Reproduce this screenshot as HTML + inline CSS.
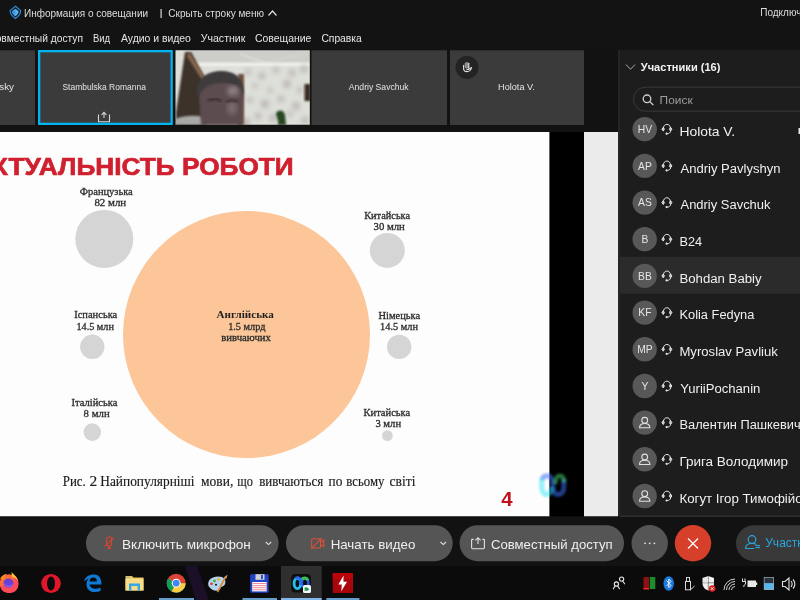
<!DOCTYPE html>
<html><head><meta charset="utf-8">
<style>
*{margin:0;padding:0}
html,body{width:800px;height:600px;overflow:hidden;background:#121212}
svg{display:block;will-change:transform}
</style></head><body>
<svg width="800" height="600" viewBox="0 0 800 600">
<defs>
<filter id="b05" x="-20%" y="-20%" width="140%" height="140%"><feGaussianBlur stdDeviation="0.6"/></filter>
<filter id="b09" x="-20%" y="-20%" width="140%" height="140%"><feGaussianBlur stdDeviation="0.9"/></filter>
<filter id="b1" x="-20%" y="-20%" width="140%" height="140%"><feGaussianBlur stdDeviation="1.2"/></filter>
<filter id="b2" x="-20%" y="-20%" width="140%" height="140%"><feGaussianBlur stdDeviation="2.5"/></filter>
<linearGradient id="ceil" x1="0" y1="0" x2="0" y2="1"><stop offset="0" stop-color="#bdbdb8"/><stop offset="1" stop-color="#d4d3ce"/></linearGradient>
<radialGradient id="face" cx="0.5" cy="0.45" r="0.6"><stop offset="0" stop-color="#a48a80"/><stop offset="1" stop-color="#6e5a55"/></radialGradient>
<clipPath id="vclip"><rect x="175.5" y="50.2" width="134.3" height="74.6"/></clipPath>
<clipPath id="slideclip"><rect x="0" y="132" width="550" height="384.5"/></clipPath>
</defs>
<!-- top bars -->
<rect x="0" y="0" width="800" height="50" fill="#131313"/>
<rect x="0" y="50" width="620" height="82" fill="#121212"/>
<!-- shield -->
<path d="M15.4 6.3 L20.6 10.6 C20.6 13.8 18.4 16.6 15.4 18.4 C12.4 16.6 10.2 13.8 10.2 10.6 Z" fill="none" stroke="#2a86d6" stroke-width="1.3"/>
<path d="M15.4 8.7 L18.7 11.2 C18.7 13.3 17.3 15 15.4 16.2 C13.5 15 12.1 13.3 12.1 11.2 Z" fill="#58b2f2"/>
<path d="M15.4 8.7 V16.2 C13.5 15 12.1 13.3 12.1 11.2 Z" fill="#3f98e0"/>
<rect x="160.5" y="9" width="1.2" height="9" fill="#d8d8d8"/>
<path d="M268.5 15.5 L272.5 11 L276.5 15.5" fill="none" stroke="#dedede" stroke-width="1.2"/>
<text transform="translate(-4.37,42) scale(0.9768,1)" font-family="Liberation Sans" font-size="10.5" fill="#e6e6e6">овместный доступ</text>
<!-- video strip tiles -->
<rect x="0" y="50.3" width="35" height="74.7" fill="#3b3b3b"/>
<text x="14" y="89.5" text-anchor="end" font-family="Liberation Sans" font-size="9.8" fill="#e4e4e4">sky</text>
<rect x="38" y="50" width="134.8" height="75" fill="#00b4ee"/>
<rect x="40.3" y="52.3" width="130.2" height="70.4" fill="#3b3b3b"/>
<g fill="none" stroke="#d8d8d8" stroke-width="1.1"><path d="M98.5 114.5 V121.8 H109.5 V114.5"/><path d="M104 118 V112.5 M101.5 115 L104 112.3 L106.5 115"/></g>
<rect x="311.5" y="50.3" width="135.5" height="74.7" fill="#3b3b3b"/>
<rect x="450" y="50.3" width="134" height="74.7" fill="#3b3b3b"/>
<circle cx="467" cy="67.4" r="11.5" fill="#232323"/>
<rect x="464.6" y="62.2" width="4.2" height="6.4" rx="1.6" fill="#8e8e8e"/>
<g fill="none" stroke="#e2e2e2" stroke-width="1.1" stroke-linecap="round"><path d="M463.6 65.4 V68.5 C463.6 70.6 465.1 71.6 467 71.6 C469.1 71.6 470.6 70.4 471.6 67.6"/><path d="M468.8 63.2 V68.6"/><path d="M466.6 69.7 C467.8 69.7 469.7 69 470.9 67.9"/></g>
<!-- video -->
<g clip-path="url(#vclip)"><g filter="url(#b05)">
<rect x="175" y="50" width="136" height="75" fill="#dddfd9"/>
<rect x="175" y="50" width="136" height="14" fill="#cdcdca"/>
<path d="M240 54 L266 63" stroke="#e6e6e2" stroke-width="1.2" filter="url(#b1)"/>
<path d="M266 63 L310 52" stroke="#d8d8d4" stroke-width="1" filter="url(#b1)"/>
<rect x="190" y="62.5" width="121" height="3.5" fill="#efefeb" filter="url(#b1)"/>
<g filter="url(#b2)" fill="#b0a4a4" opacity="0.7"><circle cx="248" cy="72" r="2.9"/><circle cx="262" cy="76" r="3.4"/><circle cx="276" cy="70" r="3.1"/><circle cx="292" cy="73" r="3.5"/><circle cx="304" cy="69" r="3.6"/><circle cx="255" cy="86" r="2.6"/><circle cx="270" cy="90" r="2.5"/><circle cx="287" cy="84" r="3.9"/><circle cx="300" cy="90" r="2.9"/><circle cx="250" cy="100" r="2.9"/><circle cx="265" cy="104" r="4.2"/><circle cx="281" cy="99" r="3.3"/><circle cx="296" cy="106" r="3.9"/><circle cx="258" cy="116" r="3.3"/><circle cx="273" cy="118" r="3.6"/><circle cx="290" cy="114" r="2.8"/><circle cx="305" cy="120" r="3.6"/><circle cx="246" cy="122" r="4.0"/></g>
<rect x="175" y="50" width="16" height="75" fill="#deded8"/>
<path d="M176 112 L185 52 L191 52 L206 80 L206 125 L176 125 Z" fill="#3e302a" filter="url(#b1)"/>
<path d="M189 52 L206 79 L206 86 L187 56 Z" fill="#8a6a50" filter="url(#b1)"/>
<rect x="238" y="74" width="6" height="51" fill="#6e5040" filter="url(#b1)"/>
<rect x="304.5" y="84" width="6" height="17" fill="#3a2a20" filter="url(#b1)"/>

<path d="M276 113 C279 109 284 110 285 115 L286 125 H278 C279 120 276 117 276 113 Z" fill="#264a22" filter="url(#b1)"/>
<path d="M175 119 C185 115 195 115 205 117 L206 125 H175 Z" fill="#a9a9a7" filter="url(#b1)"/>
<path d="M199 96 C197 83 205 73 221 73 C237 73 244 82 243 96 L242 125 H201 Z" fill="#5c4c50" filter="url(#b1)"/>
<path d="M197 94 C196 80 206 71 221 71 C237 71 245 80 243 96 C240 86 232 82 221 83 C210 83 202 87 198 98 Z" fill="#3c3a3b" filter="url(#b1)"/>
<ellipse cx="233" cy="91" rx="6" ry="5" fill="#8c8082" filter="url(#b2)"/>
<ellipse cx="232" cy="108" rx="5" ry="7" fill="#7a6c6e" filter="url(#b2)"/>
<path d="M208 101 C213 98 218 99 221 101 M226 102 C230 100 234 100 238 102" stroke="#3a2c30" stroke-width="2.2" fill="none" filter="url(#b1)"/>
</g></g>
<!-- slide -->
<rect x="0" y="132" width="550" height="384.5" fill="#fdfdfd"/>
<rect x="549.4" y="132" width="34.6" height="384.5" fill="#000"/>
<rect x="584" y="132" width="34" height="384.5" fill="#ebebeb"/>
<g clip-path="url(#slideclip)">
<text transform="translate(-27.15,174.9) scale(1.0709,1)" font-family="Liberation Sans" font-weight="700" font-size="24.5" fill="#d0202f" stroke="#d0202f" stroke-width="0.7">АКТУАЛЬНІСТЬ РОБОТИ</text>
</g>
<circle cx="246.5" cy="334.5" r="123.5" fill="#fcc698"/>
<circle cx="104.3" cy="238.9" r="29" fill="#d5d5d5"/>
<circle cx="387.3" cy="250.4" r="17.5" fill="#d5d5d5"/>
<circle cx="92.3" cy="346.8" r="12.2" fill="#d5d5d5"/>
<circle cx="399.2" cy="346.9" r="12.2" fill="#d5d5d5"/>
<circle cx="92.3" cy="432.1" r="8.8" fill="#d5d5d5"/>
<circle cx="387.4" cy="435.6" r="5.4" fill="#d5d5d5"/>
<!-- webex watermark -->
<g filter="url(#b09)" fill="none" stroke-width="5" stroke-linecap="butt">
<path d="M542.3 480 C542.8 476.8 545 475.8 547 475.8 C550.5 475.8 552 478.3 552.5 482 L553 487 C553.5 492 555.5 494.6 558.2 494.6 C561.2 494.6 563.8 492 563.8 487 V479" stroke="#3a6cf8" opacity="0.55"/>
<path d="M541.8 478.5 V486.5 C541.8 492 544 494.6 546.8 494.6 C549.5 494.6 551.6 492 551.6 487" stroke="#10e0f2" opacity="0.45"/>
<path d="M555.3 484 C555.3 478.5 557.5 475.8 559.6 475.8 C562.5 475.8 564 478.3 564 482.5" stroke="#48e070" opacity="0.5" stroke-width="4.6"/>
</g>
<!-- panel -->
<rect x="618" y="50" width="182" height="466" fill="#1d1d1d"/>
<rect x="620" y="515.8" width="180" height="1.2" fill="#4a4a4a"/>
<rect x="618.3" y="50" width="1.3" height="466" fill="#2c2c2c"/>
<path d="M626 64.5 L630.5 69.3 L635 64.5" fill="none" stroke="#a8a8a8" stroke-width="1"/>
<rect x="633.5" y="87.2" width="180" height="24" rx="12" fill="#1d1d1d" stroke="#3a3a3a" stroke-width="1"/>
<g fill="none" stroke="#cfcfcf" stroke-width="1.3"><circle cx="647" cy="98.8" r="3.8"/><path d="M649.8 101.6 L653.3 105"/></g>
<rect x="798.5" y="128" width="2" height="6" fill="#e8e8e8"/>
<rect x="620" y="256.8" width="180" height="37" fill="#2b2b2b"/><circle cx="644.7" cy="129.2" r="12.2" fill="#585858"/><text x="644.9" y="133.0" text-anchor="middle" font-family="Liberation Sans" font-size="10.3" fill="#e6e6e6">HV</text><g transform="translate(666.9,129.2)" fill="none" stroke="#e8e8e8" stroke-width="1"><path d="M-3.6 -0.5 C-3.6 -6.3 3.6 -6.3 3.6 -0.5"/><path d="M-3.6 -1.9 L-5 0 L-3.6 1.9 L-2.6 0 Z" fill="#bdbdbd"/><path d="M3.6 -1.9 L5 0 L3.6 1.9 L2.6 0 Z" fill="#bdbdbd"/><path d="M3.8 2 C3.2 3.8 2 4.4 0.3 4.6"/><circle cx="-0.3" cy="4.5" r="1.1" fill="#e8e8e8" stroke="none"/></g><circle cx="644.7" cy="165.9" r="12.2" fill="#585858"/><text x="644.9" y="169.7" text-anchor="middle" font-family="Liberation Sans" font-size="10.3" fill="#e6e6e6">AP</text><g transform="translate(666.9,165.9)" fill="none" stroke="#e8e8e8" stroke-width="1"><path d="M-3.6 -0.5 C-3.6 -6.3 3.6 -6.3 3.6 -0.5"/><path d="M-3.6 -1.9 L-5 0 L-3.6 1.9 L-2.6 0 Z" fill="#bdbdbd"/><path d="M3.6 -1.9 L5 0 L3.6 1.9 L2.6 0 Z" fill="#bdbdbd"/><path d="M3.8 2 C3.2 3.8 2 4.4 0.3 4.6"/><circle cx="-0.3" cy="4.5" r="1.1" fill="#e8e8e8" stroke="none"/></g><circle cx="644.7" cy="202.6" r="12.2" fill="#585858"/><text x="644.9" y="206.4" text-anchor="middle" font-family="Liberation Sans" font-size="10.3" fill="#e6e6e6">AS</text><g transform="translate(666.9,202.6)" fill="none" stroke="#e8e8e8" stroke-width="1"><path d="M-3.6 -0.5 C-3.6 -6.3 3.6 -6.3 3.6 -0.5"/><path d="M-3.6 -1.9 L-5 0 L-3.6 1.9 L-2.6 0 Z" fill="#bdbdbd"/><path d="M3.6 -1.9 L5 0 L3.6 1.9 L2.6 0 Z" fill="#bdbdbd"/><path d="M3.8 2 C3.2 3.8 2 4.4 0.3 4.6"/><circle cx="-0.3" cy="4.5" r="1.1" fill="#e8e8e8" stroke="none"/></g><circle cx="644.7" cy="239.2" r="12.2" fill="#585858"/><text x="644.9" y="243.0" text-anchor="middle" font-family="Liberation Sans" font-size="10.3" fill="#e6e6e6">B</text><g transform="translate(666.9,239.2)" fill="none" stroke="#e8e8e8" stroke-width="1"><path d="M-3.6 -0.5 C-3.6 -6.3 3.6 -6.3 3.6 -0.5"/><path d="M-3.6 -1.9 L-5 0 L-3.6 1.9 L-2.6 0 Z" fill="#bdbdbd"/><path d="M3.6 -1.9 L5 0 L3.6 1.9 L2.6 0 Z" fill="#bdbdbd"/><path d="M3.8 2 C3.2 3.8 2 4.4 0.3 4.6"/><circle cx="-0.3" cy="4.5" r="1.1" fill="#e8e8e8" stroke="none"/></g><circle cx="644.7" cy="275.9" r="12.2" fill="#585858"/><text x="644.9" y="279.7" text-anchor="middle" font-family="Liberation Sans" font-size="10.3" fill="#e6e6e6">BB</text><g transform="translate(666.9,275.9)" fill="none" stroke="#e8e8e8" stroke-width="1"><path d="M-3.6 -0.5 C-3.6 -6.3 3.6 -6.3 3.6 -0.5"/><path d="M-3.6 -1.9 L-5 0 L-3.6 1.9 L-2.6 0 Z" fill="#bdbdbd"/><path d="M3.6 -1.9 L5 0 L3.6 1.9 L2.6 0 Z" fill="#bdbdbd"/><path d="M3.8 2 C3.2 3.8 2 4.4 0.3 4.6"/><circle cx="-0.3" cy="4.5" r="1.1" fill="#e8e8e8" stroke="none"/></g><circle cx="644.7" cy="312.6" r="12.2" fill="#585858"/><text x="644.9" y="316.4" text-anchor="middle" font-family="Liberation Sans" font-size="10.3" fill="#e6e6e6">KF</text><g transform="translate(666.9,312.6)" fill="none" stroke="#e8e8e8" stroke-width="1"><path d="M-3.6 -0.5 C-3.6 -6.3 3.6 -6.3 3.6 -0.5"/><path d="M-3.6 -1.9 L-5 0 L-3.6 1.9 L-2.6 0 Z" fill="#bdbdbd"/><path d="M3.6 -1.9 L5 0 L3.6 1.9 L2.6 0 Z" fill="#bdbdbd"/><path d="M3.8 2 C3.2 3.8 2 4.4 0.3 4.6"/><circle cx="-0.3" cy="4.5" r="1.1" fill="#e8e8e8" stroke="none"/></g><circle cx="644.7" cy="349.3" r="12.2" fill="#585858"/><text x="644.9" y="353.1" text-anchor="middle" font-family="Liberation Sans" font-size="10.3" fill="#e6e6e6">MP</text><g transform="translate(666.9,349.3)" fill="none" stroke="#e8e8e8" stroke-width="1"><path d="M-3.6 -0.5 C-3.6 -6.3 3.6 -6.3 3.6 -0.5"/><path d="M-3.6 -1.9 L-5 0 L-3.6 1.9 L-2.6 0 Z" fill="#bdbdbd"/><path d="M3.6 -1.9 L5 0 L3.6 1.9 L2.6 0 Z" fill="#bdbdbd"/><path d="M3.8 2 C3.2 3.8 2 4.4 0.3 4.6"/><circle cx="-0.3" cy="4.5" r="1.1" fill="#e8e8e8" stroke="none"/></g><circle cx="644.7" cy="386.0" r="12.2" fill="#585858"/><text x="644.9" y="389.8" text-anchor="middle" font-family="Liberation Sans" font-size="10.3" fill="#e6e6e6">Y</text><g transform="translate(666.9,386.0)" fill="none" stroke="#e8e8e8" stroke-width="1"><path d="M-3.6 -0.5 C-3.6 -6.3 3.6 -6.3 3.6 -0.5"/><path d="M-3.6 -1.9 L-5 0 L-3.6 1.9 L-2.6 0 Z" fill="#bdbdbd"/><path d="M3.6 -1.9 L5 0 L3.6 1.9 L2.6 0 Z" fill="#bdbdbd"/><path d="M3.8 2 C3.2 3.8 2 4.4 0.3 4.6"/><circle cx="-0.3" cy="4.5" r="1.1" fill="#e8e8e8" stroke="none"/></g><circle cx="644.7" cy="422.6" r="12.2" fill="#585858"/><g transform="translate(644.7,422.6)" fill="none" stroke="#e0e0e0" stroke-width="1.1"><circle cx="0" cy="-2.3" r="2.9"/><path d="M-5.2 5.2 C-5.2 2 -3 0.9 0 0.9 C3 0.9 5.2 2 5.2 5.2 Z"/></g><g transform="translate(666.9,422.6)" fill="none" stroke="#e8e8e8" stroke-width="1"><path d="M-3.6 -0.5 C-3.6 -6.3 3.6 -6.3 3.6 -0.5"/><path d="M-3.6 -1.9 L-5 0 L-3.6 1.9 L-2.6 0 Z" fill="#bdbdbd"/><path d="M3.6 -1.9 L5 0 L3.6 1.9 L2.6 0 Z" fill="#bdbdbd"/><path d="M3.8 2 C3.2 3.8 2 4.4 0.3 4.6"/><circle cx="-0.3" cy="4.5" r="1.1" fill="#e8e8e8" stroke="none"/></g><circle cx="644.7" cy="459.3" r="12.2" fill="#585858"/><g transform="translate(644.7,459.3)" fill="none" stroke="#e0e0e0" stroke-width="1.1"><circle cx="0" cy="-2.3" r="2.9"/><path d="M-5.2 5.2 C-5.2 2 -3 0.9 0 0.9 C3 0.9 5.2 2 5.2 5.2 Z"/></g><g transform="translate(666.9,459.3)" fill="none" stroke="#e8e8e8" stroke-width="1"><path d="M-3.6 -0.5 C-3.6 -6.3 3.6 -6.3 3.6 -0.5"/><path d="M-3.6 -1.9 L-5 0 L-3.6 1.9 L-2.6 0 Z" fill="#bdbdbd"/><path d="M3.6 -1.9 L5 0 L3.6 1.9 L2.6 0 Z" fill="#bdbdbd"/><path d="M3.8 2 C3.2 3.8 2 4.4 0.3 4.6"/><circle cx="-0.3" cy="4.5" r="1.1" fill="#e8e8e8" stroke="none"/></g><circle cx="644.7" cy="496.0" r="12.2" fill="#585858"/><g transform="translate(644.7,496.0)" fill="none" stroke="#e0e0e0" stroke-width="1.1"><circle cx="0" cy="-2.3" r="2.9"/><path d="M-5.2 5.2 C-5.2 2 -3 0.9 0 0.9 C3 0.9 5.2 2 5.2 5.2 Z"/></g><g transform="translate(666.9,496.0)" fill="none" stroke="#e8e8e8" stroke-width="1"><path d="M-3.6 -0.5 C-3.6 -6.3 3.6 -6.3 3.6 -0.5"/><path d="M-3.6 -1.9 L-5 0 L-3.6 1.9 L-2.6 0 Z" fill="#bdbdbd"/><path d="M3.6 -1.9 L5 0 L3.6 1.9 L2.6 0 Z" fill="#bdbdbd"/><path d="M3.8 2 C3.2 3.8 2 4.4 0.3 4.6"/><circle cx="-0.3" cy="4.5" r="1.1" fill="#e8e8e8" stroke="none"/></g>
<!-- bottom bar -->
<rect x="0" y="516.5" width="800" height="49.5" fill="#121212"/>
<rect x="0" y="566" width="800" height="34" fill="#0b0b0c"/>
<rect x="86" y="525.2" width="192.6" height="36" rx="18" fill="#555555"/>
<rect x="286" y="525.2" width="166.7" height="36" rx="18" fill="#555555"/>
<rect x="459.6" y="525.2" width="164.4" height="36" rx="18" fill="#555555"/>
<circle cx="649.7" cy="543.3" r="18.2" fill="#555555"/>
<circle cx="693" cy="543.3" r="18.2" fill="#d6402a"/>
<rect x="736" y="525.2" width="120" height="36" rx="18" fill="#393939"/>
<g fill="none" stroke="#dd4330" stroke-width="1.1"><rect x="106.7" y="536.7" width="4.8" height="9.4" rx="2.4"/><path d="M104.6 546.6 L113.8 537.6"/></g><path d="M107 548.9 H111.4 L109.2 546.3 Z" fill="#dd4330"/>
<path d="M265.8 542 L268.5 544.6 L271.2 542" fill="none" stroke="#e0e0e0" stroke-width="1.1"/>
<g fill="none" stroke="#de5038" stroke-width="1.1"><rect x="311.7" y="538.7" width="8.8" height="9.3" rx="1"/><path d="M320.6 542 L323.8 540.2 V546.5 L320.6 544.8 M311.3 548.6 L321.8 537.9"/></g>
<path d="M440.5 542 L443.3 544.6 L446 542" fill="none" stroke="#e0e0e0" stroke-width="1.1"/>
<g fill="none" stroke="#e2e2e2" stroke-width="1.1"><path d="M473.6 539.4 H472.3 Q471.6 539.4 471.6 540.2 V547.6 Q471.6 548.7 472.7 548.7 H483.3 Q484.4 548.7 484.4 547.6 V540.2 Q484.4 539.4 483.7 539.4 H482.4"/><path d="M478 543.9 V537.9 M475.4 540.4 L478 537.7 L480.6 540.4"/></g>
<g fill="#e6e6e6"><circle cx="645" cy="543.3" r="0.9"/><circle cx="649.7" cy="543.3" r="0.9"/><circle cx="654.4" cy="543.3" r="0.9"/></g>
<path d="M688 538.5 L698 548.5 M698 538.5 L688 548.5" stroke="#fff" stroke-width="1.2"/>
<g fill="none" stroke="#2aa6dd" stroke-width="1.2"><circle cx="752" cy="539.5" r="3.8"/><path d="M745.5 548.5 C745.5 544.5 748 543.5 752 543.5 C754 543.5 755.5 543.8 756.5 544.5 M745.5 548.5 H754"/></g>
<rect x="755.5" y="545" width="4.5" height="1.1" fill="#2aa6dd"/><rect x="755.5" y="547" width="4.5" height="1.1" fill="#2aa6dd"/>
<!-- taskbar -->
<path d="M185 566 H197 L209 600 H196 Z" fill="#1c0f28"/>
<rect x="281" y="566" width="40.7" height="34" fill="#2f2f2f"/>
<rect x="159" y="598" width="35" height="2" fill="#76b9ed" opacity="0.85"/>
<rect x="242.5" y="598" width="34.5" height="2" fill="#76b9ed" opacity="0.85"/>
<rect x="281" y="598" width="40.7" height="2" fill="#80b8ea"/>
<rect x="326.4" y="598" width="33" height="2" fill="#76b9ed" opacity="0.85"/>
<!-- firefox -->
<g><circle cx="9" cy="583.5" r="9.3" fill="#ff6a3a"/><path d="M0.5 586 C1 592 6 593 10 593 C15 593 18.5 589 18.5 584 C18.5 580 17 577 14 575 C15 579 14 583 11 585 Z" fill="#ff4a5a"/><path d="M11.5 572 C13 574 17 576 18 581 C16 578 14 577 12 577 Z" fill="#ffc23a"/><path d="M0 579 C2 575 5 574 7 574 C5 576 4 578 4.5 580 Z" fill="#ff8a20"/><ellipse cx="8.5" cy="583" rx="5" ry="4.6" fill="#6b3fd6"/><path d="M3.5 583 C4 586 7 588 10 587.5 C12 587 13.5 585 13.5 583 C12 585 9 586 6.5 585 Z" fill="#8a5ae8"/></g>
<!-- opera -->
<ellipse cx="51" cy="583.5" rx="9.8" ry="9.6" fill="#e2162b"/><ellipse cx="51" cy="583.5" rx="4" ry="7" fill="#0b0b0c"/>
<!-- edge -->
<g><path d="M84.5 580 C86 576 90 574.5 94 574.5 C99.5 574.5 101.5 579 101.5 584.5 H89.5 C90 588.5 95 590 100.5 587.5 V591 C94 593.5 86.5 592 86.5 584 C86.5 581 88 579 89 578.5 C87 579 85.5 580 84.5 581.5 Z M89.6 581.5 H97 C97 578.5 95.5 577.5 93.3 577.5 C91 577.5 89.8 579 89.6 581.5 Z" fill="#0f7ad6"/></g>
<!-- folder -->
<g><path d="M125.5 576 H132 L133.5 577.5 H143.5 V590.5 H125.5 Z" fill="#e8c05a"/><rect x="125.5" y="578.5" width="18" height="12" fill="#f9dc86"/><rect x="126.5" y="576.8" width="3" height="1" fill="#6ac8e8"/><path d="M129 590.5 V583.5 H140 V590.5 H137.6 V586 H131.4 V590.5 Z" fill="#30a8e8"/></g>
<!-- chrome -->
<g><circle cx="176.2" cy="583.2" r="9.4" fill="#db4437"/><path d="M176.2 583.2 L167.9 578.5 A9.4 9.4 0 0 0 171.5 591.4 Z" fill="#0f9d58"/><path d="M176.2 583.2 L171.5 591.4 A9.4 9.4 0 0 0 185.6 583.2 Z" fill="#0f9d58"/><path d="M176.2 583.2 L185.6 583.2 A9.4 9.4 0 0 1 176.2 592.6 L171.5 591.4 Z" fill="#ffcd40"/><circle cx="176.2" cy="583.2" r="4.4" fill="#fff"/><circle cx="176.2" cy="583.2" r="3.4" fill="#4285f4"/></g>
<!-- paint -->
<g><path d="M208.5 586 C207 580 212 576.5 218 576.5 C224 576.5 226.5 580 225 584 C224 587 221 586 220.5 588 C220 591.5 213 592.5 208.5 586 Z" fill="#b4d4ee"/><circle cx="211.5" cy="583.8" r="1.4" fill="#e04030"/><circle cx="214.5" cy="581" r="1.4" fill="#40b040"/><circle cx="218.5" cy="579.3" r="1.4" fill="#f0b020"/><circle cx="216" cy="584.8" r="1" fill="#111"/><path d="M217.5 592 L225.5 577" stroke="#e08a30" stroke-width="1.6"/><path d="M224 577.5 L227.5 574.5 L226.5 578.5 Z" fill="#d8a060"/></g>
<!-- floppy -->
<g><rect x="250.2" y="574.2" width="18.4" height="18.6" rx="1" fill="#1f44c8"/><rect x="255.5" y="574.2" width="9" height="5.6" fill="#d0d0d0"/><rect x="261" y="575" width="1.8" height="4" fill="#1f44c8"/><rect x="252.2" y="582" width="14.4" height="9.4" fill="#fafafa"/><path d="M252.5 583.5 H266.3 M252.5 585.6 H266.3 M252.5 587.7 H266.3 M252.5 589.8 H266.3" stroke="#f08a9a" stroke-width="1"/></g>
<!-- webex taskbar -->
<g><rect x="291.3" y="574" width="19.6" height="18.6" rx="4" fill="#0e0e0e"/>
<ellipse cx="305" cy="583" rx="3.3" ry="4.6" fill="none" stroke="#2a55e8" stroke-width="2.8"/>
<path d="M302 580 C302.5 577.5 306.5 577 308 580.5" fill="none" stroke="#3cc05a" stroke-width="2.8"/>
<ellipse cx="297.4" cy="583.4" rx="3.3" ry="5.2" fill="none" stroke="#1ec0ee" stroke-width="2.9"/>
<path d="M295.5 579 C296.5 577 299.5 577 300.8 580.5 L300.8 585" fill="none" stroke="#2a6af0" stroke-width="2.9"/>
<rect x="303" y="585" width="8" height="8" rx="1.5" fill="#f4f4f4"/><path d="M304.6 587.5 H307.5 L309.3 589.2 L307.5 590.8 H304.6 Z" fill="#1e9a5a"/></g>
<!-- red lightning -->
<rect x="332.7" y="573" width="20.3" height="20" fill="#a8060c"/><rect x="332.7" y="573" width="20.3" height="6" fill="#b8040a"/><path d="M343.6 575.6 L338.4 584.4 H341.8 L341.3 591.3 L347 581.8 H343.4 Z" fill="#fff"/>
<!-- tray -->
<g fill="none" stroke="#e8e8e8" stroke-width="1.1" stroke-linecap="round"><circle cx="621.6" cy="579.1" r="2.1"/><circle cx="616.4" cy="584" r="2.1"/><path d="M622.8 581.2 L624.6 583.8 M615.1 586.1 L613.3 588.8 M617.7 586.1 L619.5 588.8"/></g>
<rect x="643.5" y="577" width="5.5" height="12" fill="#8c1014"/><rect x="643.5" y="588" width="5.5" height="1.5" fill="#ff2020"/><rect x="649.8" y="577" width="5.5" height="12" fill="#1c8c2c"/>
<ellipse cx="668.7" cy="583.5" rx="5.2" ry="7.3" fill="#1a7ae0"/><path d="M666.5 580.5 L671 585.5 L668.8 587.8 V579 L671 581.3 L666.5 586" fill="none" stroke="#fff" stroke-width="0.9"/>
<g fill="none" stroke="#d8d8d8" stroke-width="1"><rect x="685.5" y="581.5" width="5" height="8.3"/><rect x="686.5" y="577.5" width="3" height="4"/><path d="M690.5 589.8 L694.5 586"/></g>
<g><path d="M702.5 578 L708.3 576 L714 578 V583 C714 587 711.5 589.5 708.3 590.5 C705 589.5 702.5 587 702.5 583 Z" fill="#f2f2f2"/><path d="M708.3 576 V590.5 M702.5 582.8 H714" stroke="#444" stroke-width="0.6"/><path d="M703.3 578.5 L708 577 V582.5 H703.3 Z" fill="#e8e8e8"/><circle cx="712.2" cy="588.6" r="3.3" fill="#d42020"/><path d="M710.8 587.2 L713.6 590 M713.6 587.2 L710.8 590" stroke="#fff" stroke-width="0.8"/></g>
<g fill="none" stroke="#d0d0d0" stroke-width="1"><path d="M724 590 A11 11 0 0 1 735 579"/><path d="M726.5 590 A8.5 8.5 0 0 1 735 581.5"/><path d="M729 590 A6 6 0 0 1 735 584"/><path d="M731.5 590 A3.5 3.5 0 0 1 735 586.5"/></g>
<g fill="none" stroke="#e0e0e0" stroke-width="1"><path d="M742.5 578.5 V581.5 M745 578.5 V581.5 M742 581.5 H745.5 V583 C745.5 584.5 744.5 585.5 743.8 585.5 V587"/></g><rect x="747.5" y="580.5" width="8.5" height="6.5" fill="#e8e8e8"/><rect x="756" y="582.5" width="1.2" height="2.5" fill="#e8e8e8"/>
<rect x="763.8" y="577" width="10.2" height="13" fill="#9aa8b4"/><rect x="764.5" y="577.7" width="8.8" height="5.6" fill="#26323e"/><rect x="764.5" y="583.3" width="8.8" height="6" fill="#56b6ee"/>
<g fill="none" stroke="#e0e0e0" stroke-width="1.1"><path d="M782.5 581.5 H785 L789 578 V590 L785 586.5 H782.5 Z"/><path d="M791 581 C792.5 583 792.5 585 791 587 M793 579.5 C795.5 582 795.5 586 793 588.5"/></g>
<text style="white-space:pre" transform="translate(24.00,17.00) scale(0.9994,1)" font-family="'Liberation Sans'" font-size="10" font-weight="400" fill="#dedede">Информация о совещании</text>
<text style="white-space:pre" transform="translate(168.25,17.00) scale(1.0059,1)" font-family="'Liberation Sans'" font-size="10" font-weight="400" fill="#dedede">Скрыть строку меню</text>
<text style="white-space:pre" transform="translate(760.20,15.70) scale(1.0000,1)" font-family="'Liberation Sans'" font-size="10" font-weight="400" fill="#dedede">Подключ</text>
<text style="white-space:pre" transform="translate(92.99,42.00) scale(0.9021,1)" font-family="'Liberation Sans'" font-size="10.5" font-weight="400" fill="#e6e6e6">Вид</text>
<text style="white-space:pre" transform="translate(121.00,42.00) scale(0.9909,1)" font-family="'Liberation Sans'" font-size="10.5" font-weight="400" fill="#e6e6e6">Аудио и видео</text>
<text style="white-space:pre" transform="translate(200.74,42.00) scale(1.0088,1)" font-family="'Liberation Sans'" font-size="10.5" font-weight="400" fill="#e6e6e6">Участник</text>
<text style="white-space:pre" transform="translate(254.98,42.00) scale(0.9956,1)" font-family="'Liberation Sans'" font-size="10.5" font-weight="400" fill="#e6e6e6">Совещание</text>
<text style="white-space:pre" transform="translate(321.38,42.00) scale(0.9827,1)" font-family="'Liberation Sans'" font-size="10.5" font-weight="400" fill="#e6e6e6">Справка</text>
<text style="white-space:pre" transform="translate(62.42,89.50) scale(0.8666,1)" font-family="'Liberation Sans'" font-size="9.8" font-weight="400" fill="#e4e4e4">Stambulska Romanna</text>
<text style="white-space:pre" transform="translate(348.80,89.50) scale(0.8806,1)" font-family="'Liberation Sans'" font-size="9.8" font-weight="400" fill="#e4e4e4">Andriy Savchuk</text>
<text style="white-space:pre" transform="translate(498.07,89.50) scale(0.9321,1)" font-family="'Liberation Sans'" font-size="9.8" font-weight="400" fill="#e4e4e4">Holota V.</text>
<text style="white-space:pre" transform="translate(640.80,71.30) scale(0.9636,1)" font-family="'Liberation Sans'" font-size="11.5" font-weight="700" fill="#f2f2f2">Участники (16)</text>
<text style="white-space:pre" transform="translate(659.54,103.70) scale(1.0881,1)" font-family="'Liberation Sans'" font-size="11" font-weight="400" fill="#9c9c9c">Поиск</text>
<text style="white-space:pre" transform="translate(679.39,135.90) scale(1.0284,1)" font-family="'Liberation Sans'" font-size="13.5" font-weight="400" fill="#f0f0f0">Holota V.</text>
<text style="white-space:pre" transform="translate(680.50,172.58) scale(0.9667,1)" font-family="'Liberation Sans'" font-size="13.5" font-weight="400" fill="#f0f0f0">Andriy Pavlyshyn</text>
<text style="white-space:pre" transform="translate(680.50,209.26) scale(0.9610,1)" font-family="'Liberation Sans'" font-size="13.5" font-weight="400" fill="#f0f0f0">Andriy Savchuk</text>
<text style="white-space:pre" transform="translate(679.49,245.94) scale(0.9386,1)" font-family="'Liberation Sans'" font-size="13.5" font-weight="400" fill="#f0f0f0">B24</text>
<text style="white-space:pre" transform="translate(679.44,282.62) scale(0.9785,1)" font-family="'Liberation Sans'" font-size="13.5" font-weight="400" fill="#f0f0f0">Bohdan Babiy</text>
<text style="white-space:pre" transform="translate(679.47,319.30) scale(0.9515,1)" font-family="'Liberation Sans'" font-size="13.5" font-weight="400" fill="#f0f0f0">Kolia Fedyna</text>
<text style="white-space:pre" transform="translate(679.45,355.98) scale(0.9724,1)" font-family="'Liberation Sans'" font-size="13.5" font-weight="400" fill="#f0f0f0">Myroslav Pavliuk</text>
<text style="white-space:pre" transform="translate(680.24,392.66) scale(0.9710,1)" font-family="'Liberation Sans'" font-size="13.5" font-weight="400" fill="#f0f0f0">YuriiPochanin</text>
<text style="white-space:pre" transform="translate(679.47,429.34) scale(0.9500,1)" font-family="'Liberation Sans'" font-size="13.5" font-weight="400" fill="#f0f0f0">Валентин Пашкевич</text>
<text style="white-space:pre" transform="translate(679.42,466.02) scale(0.9995,1)" font-family="'Liberation Sans'" font-size="13.5" font-weight="400" fill="#f0f0f0">Грига Володимир</text>
<text style="white-space:pre" transform="translate(679.44,502.70) scale(0.9850,1)" font-family="'Liberation Sans'" font-size="13.5" font-weight="400" fill="#f0f0f0">Когут Ігор Тимофійович</text>
<text style="white-space:pre" transform="translate(122.01,548.80) scale(1.0136,1)" font-family="'Liberation Sans'" font-size="13.4" font-weight="400" fill="#efefef">Включить микрофон</text>
<text style="white-space:pre" transform="translate(330.63,548.80) scale(0.9950,1)" font-family="'Liberation Sans'" font-size="13.4" font-weight="400" fill="#efefef">Начать видео</text>
<text style="white-space:pre" transform="translate(490.94,548.80) scale(0.9821,1)" font-family="'Liberation Sans'" font-size="13.4" font-weight="400" fill="#efefef">Совместный доступ</text>
<text style="white-space:pre" transform="translate(765.20,546.60) scale(0.9000,1)" font-family="'Liberation Sans'" font-size="13.4" font-weight="400" fill="#2aa6dd">Участники</text>
<text style="white-space:pre" transform="translate(79.78,195.00) scale(1.0456,1)" font-family="'Liberation Serif'" font-size="10" font-weight="400" fill="#2e2e2e" stroke="#2e2e2e" stroke-width="0.3">Французька</text>
<text style="white-space:pre" transform="translate(94.42,205.50) scale(1.0902,1)" font-family="'Liberation Serif'" font-size="10" font-weight="400" fill="#2e2e2e" stroke="#2e2e2e" stroke-width="0.3">82 млн</text>
<text style="white-space:pre" transform="translate(364.14,218.70) scale(1.0338,1)" font-family="'Liberation Serif'" font-size="10" font-weight="400" fill="#2e2e2e" stroke="#2e2e2e" stroke-width="0.3">Китайська</text>
<text style="white-space:pre" transform="translate(373.52,229.60) scale(1.0765,1)" font-family="'Liberation Serif'" font-size="10" font-weight="400" fill="#2e2e2e" stroke="#2e2e2e" stroke-width="0.3">30 млн</text>
<text style="white-space:pre" transform="translate(216.54,318.00) scale(1.1130,1)" font-family="'Liberation Serif'" font-size="10" font-weight="700" fill="#1e1e1e">Англійська</text>
<text style="white-space:pre" transform="translate(228.13,330.10) scale(1.0273,1)" font-family="'Liberation Serif'" font-size="10" font-weight="400" fill="#2e2e2e" stroke="#2e2e2e" stroke-width="0.3">1.5 млрд</text>
<text style="white-space:pre" transform="translate(221.24,340.50) scale(1.0737,1)" font-family="'Liberation Serif'" font-size="10" font-weight="400" fill="#2e2e2e" stroke="#2e2e2e" stroke-width="0.3">вивчаючих</text>
<text style="white-space:pre" transform="translate(74.23,318.10) scale(1.0488,1)" font-family="'Liberation Serif'" font-size="10" font-weight="400" fill="#2e2e2e" stroke="#2e2e2e" stroke-width="0.3">Іспанська</text>
<text style="white-space:pre" transform="translate(76.43,329.80) scale(1.0219,1)" font-family="'Liberation Serif'" font-size="10" font-weight="400" fill="#2e2e2e" stroke="#2e2e2e" stroke-width="0.3">14.5 млн</text>
<text style="white-space:pre" transform="translate(378.44,318.70) scale(1.0485,1)" font-family="'Liberation Serif'" font-size="10" font-weight="400" fill="#2e2e2e" stroke="#2e2e2e" stroke-width="0.3">Німецька</text>
<text style="white-space:pre" transform="translate(380.12,330.00) scale(1.0332,1)" font-family="'Liberation Serif'" font-size="10" font-weight="400" fill="#2e2e2e" stroke="#2e2e2e" stroke-width="0.3">14.5 млн</text>
<text style="white-space:pre" transform="translate(71.43,406.00) scale(1.0585,1)" font-family="'Liberation Serif'" font-size="10" font-weight="400" fill="#2e2e2e" stroke="#2e2e2e" stroke-width="0.3">Італійська</text>
<text style="white-space:pre" transform="translate(83.62,417.00) scale(1.0797,1)" font-family="'Liberation Serif'" font-size="10" font-weight="400" fill="#2e2e2e" stroke="#2e2e2e" stroke-width="0.3">8 млн</text>
<text style="white-space:pre" transform="translate(363.54,415.60) scale(1.0497,1)" font-family="'Liberation Serif'" font-size="10" font-weight="400" fill="#2e2e2e" stroke="#2e2e2e" stroke-width="0.3">Китайська</text>
<text style="white-space:pre" transform="translate(375.42,427.10) scale(1.0630,1)" font-family="'Liberation Serif'" font-size="10" font-weight="400" fill="#2e2e2e" stroke="#2e2e2e" stroke-width="0.3">3 млн</text>
<text style="white-space:pre" transform="translate(62.78,486.25) scale(0.9163,1)" font-family="'Liberation Serif'" font-size="14.1" font-weight="400" fill="#1c1c1c" stroke="#1c1c1c" stroke-width="0.15">Рис.</text>
<text style="white-space:pre" transform="translate(89.38,486.25) scale(1.0945,1)" font-family="'Liberation Serif'" font-size="14.1" font-weight="400" fill="#1c1c1c" stroke="#1c1c1c" stroke-width="0.15">2</text>
<text style="white-space:pre" transform="translate(100.27,486.25) scale(0.9497,1)" font-family="'Liberation Serif'" font-size="14.1" font-weight="400" fill="#1c1c1c" stroke="#1c1c1c" stroke-width="0.15">Найпопулярніші</text>
<text style="white-space:pre" transform="translate(200.98,486.25) scale(0.9594,1)" font-family="'Liberation Serif'" font-size="14.1" font-weight="400" fill="#1c1c1c" stroke="#1c1c1c" stroke-width="0.15">мови,</text>
<text style="white-space:pre" transform="translate(237.32,486.25) scale(0.8720,1)" font-family="'Liberation Serif'" font-size="14.1" font-weight="400" fill="#1c1c1c" stroke="#1c1c1c" stroke-width="0.15">що</text>
<text style="white-space:pre" transform="translate(259.20,486.25) scale(0.9241,1)" font-family="'Liberation Serif'" font-size="14.1" font-weight="400" fill="#1c1c1c" stroke="#1c1c1c" stroke-width="0.15">вивчаються</text>
<text style="white-space:pre" transform="translate(328.55,486.25) scale(0.9467,1)" font-family="'Liberation Serif'" font-size="14.1" font-weight="400" fill="#1c1c1c" stroke="#1c1c1c" stroke-width="0.15">по</text>
<text style="white-space:pre" transform="translate(346.31,486.25) scale(0.9066,1)" font-family="'Liberation Serif'" font-size="14.1" font-weight="400" fill="#1c1c1c" stroke="#1c1c1c" stroke-width="0.15">всьому</text>
<text style="white-space:pre" transform="translate(389.52,486.25) scale(0.9649,1)" font-family="'Liberation Serif'" font-size="14.1" font-weight="400" fill="#1c1c1c" stroke="#1c1c1c" stroke-width="0.15">світі</text>
<text style="white-space:pre" transform="translate(501.19,506.20) scale(0.9937,1)" font-family="'Liberation Sans'" font-size="20.5" font-weight="700" fill="#c0121c">4</text>
</svg>
</body></html>
